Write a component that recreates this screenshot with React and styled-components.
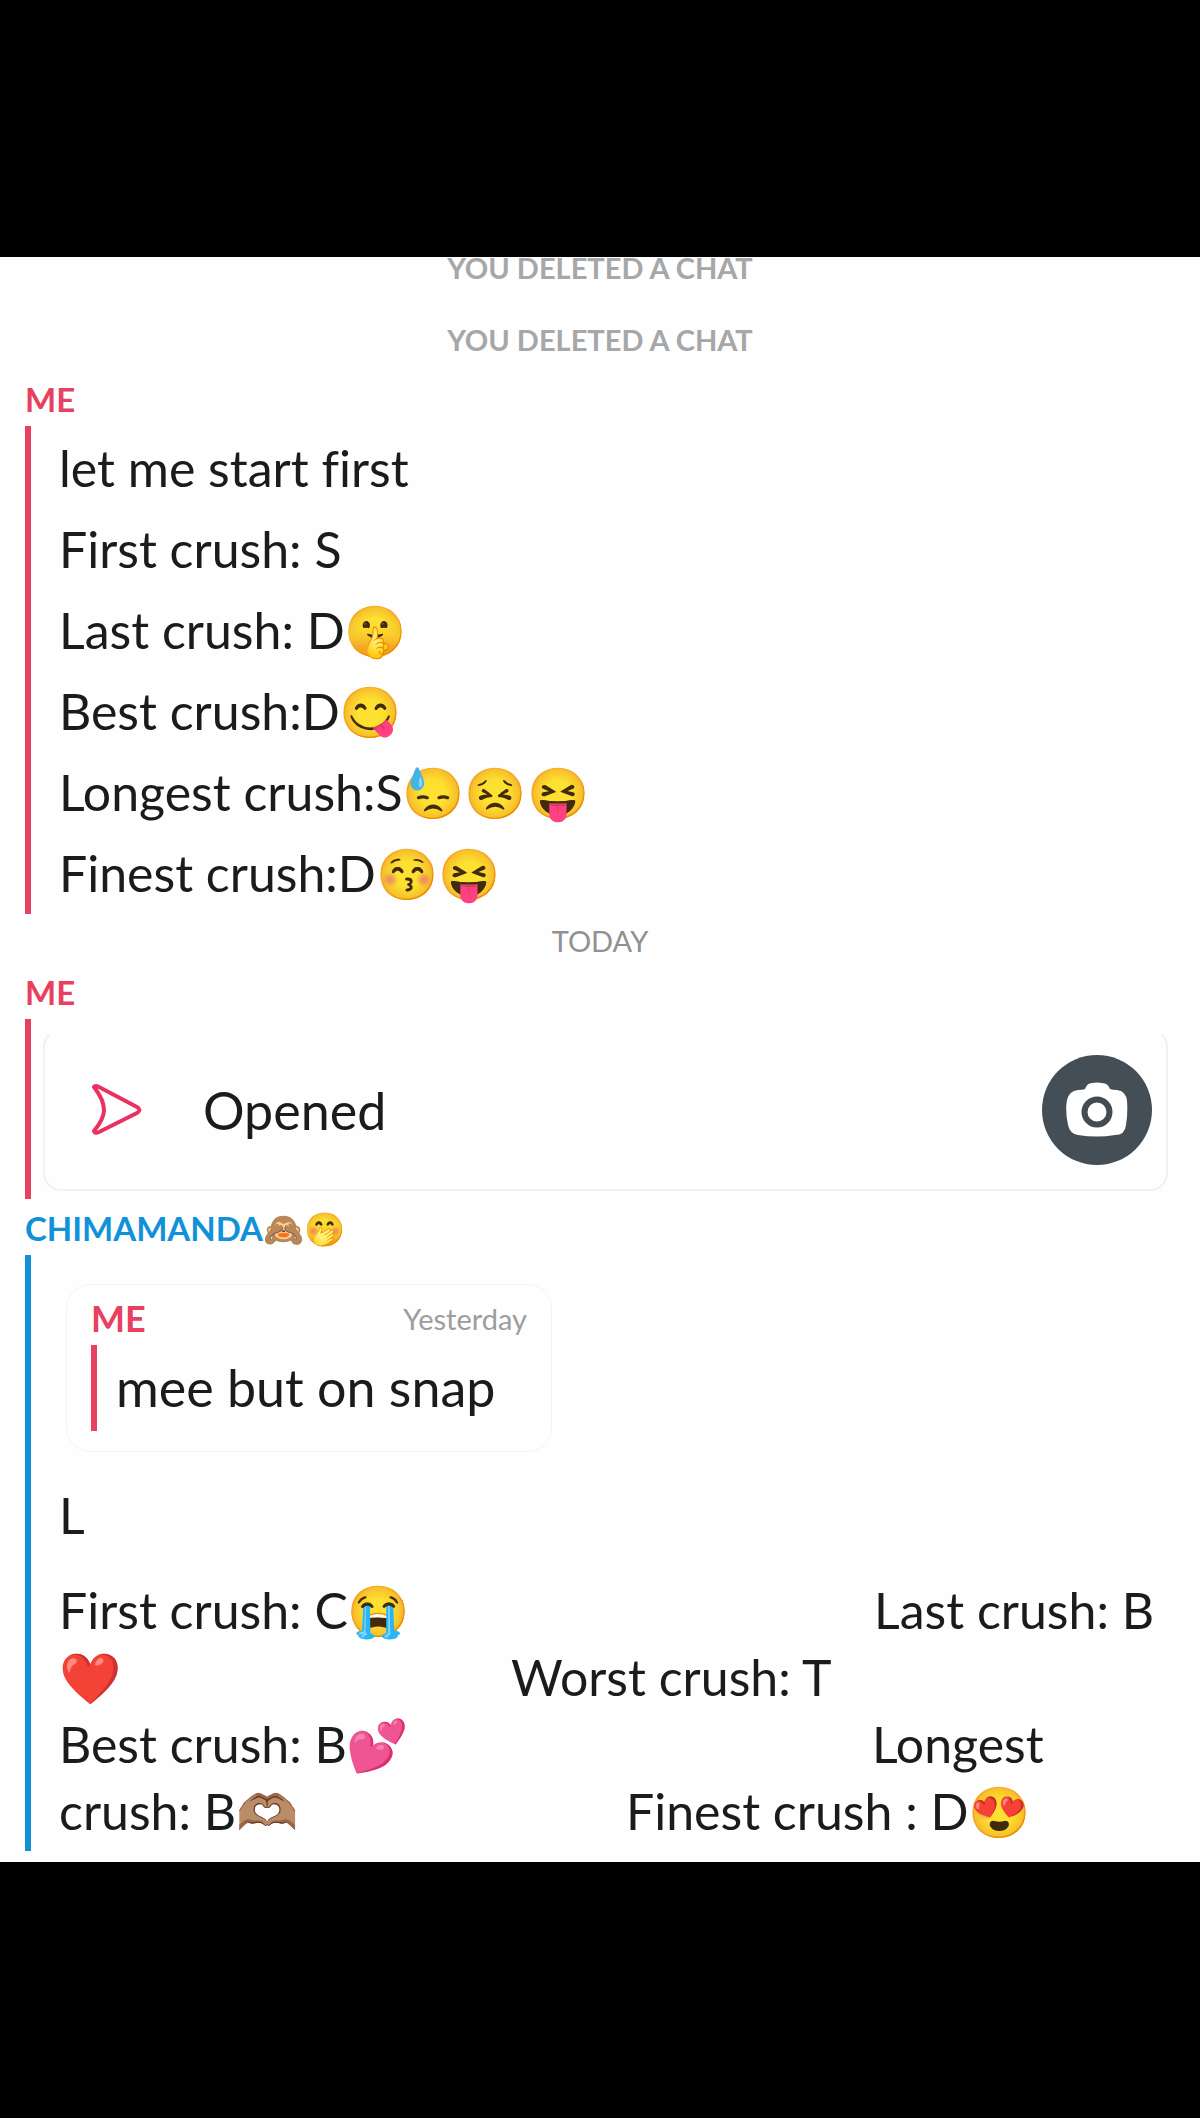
import styled, { createGlobalStyle } from 'styled-components';

const RED = '#e8415f';
const BLUE = '#1191d8';

const GlobalStyle = createGlobalStyle`
  body {
    margin: 0;
    background: #000;
    font-family: Lato, 'Noto Color Emoji', sans-serif;
    font-variant-ligatures: none;
  }
`;

const Page = styled.div`
  display: flex;
  flex-direction: column;
  justify-content: center;
  min-height: 100vh;
`;

const Screen = styled.main`
  background: #fefefe;
  color: #191b1c;
  padding-bottom: 11px;
`;

const Notices = styled.div`
  display: flex;
  flex-direction: column;
  align-items: center;
  gap: 50px;
  padding-bottom: 23px;
`;

const Notice = styled.div`
  font-size: 29px;
  font-weight: 700;
  line-height: 22px;
  color: #a5a7a9;
`;

const DateLabel = styled.div`
  text-align: center;
  font-size: 29px;
  line-height: 53px;
  color: #8f9193;
`;

const Sender = styled.div`
  font-size: ${(props) => props.$size || 33}px;
  font-weight: 700;
  line-height: 50px;
  padding-bottom: 2px;
  color: ${(props) => props.$color};
`;

const Group = styled.section`
  padding: 0 32px 0 25px;
  margin-bottom: ${(props) => props.$after || 0}px;
`;

const Thread = styled.div`
  border-left: 6px solid ${(props) => props.$color};
  padding: ${(props) => props.$padding};
`;

const Line = styled.div`
  display: flex;
  font-size: 50px;
  line-height: ${(props) => (props.$tall ? 81 : 67)}px;
  white-space: nowrap;
`;

// first half of a line, the second half starts after it
const Lead = styled.span`
  flex: 0 0 ${(props) => props.$width}px;
`;

const SnapCard = styled.div`
  display: flex;
  align-items: center;
  height: 158px;
  padding: 0 14px 0 46px;
  border: 2px solid #f0f1f1;
  border-top-color: transparent;
  border-radius: 18px;
`;

const SnapStatus = styled.span`
  flex: 1;
  margin-left: 60px;
  font-size: 52px;
`;

const CameraButton = styled.button`
  display: flex;
  align-items: center;
  justify-content: center;
  width: 110px;
  height: 110px;
  padding: 0;
  border: none;
  border-radius: 50%;
  background: #444e57;
`;

const Quote = styled.blockquote`
  width: 436px;
  margin: 28px 0 30px 7px;
  padding: 8px 24px 20px 24px;
  border: 1px solid #f3f4f4;
  border-radius: 24px;
`;

const QuoteHeader = styled.div`
  display: flex;
  justify-content: space-between;
  align-items: center;
`;

const QuoteTime = styled.time`
  font-size: 29px;
  color: #9b9d9f;
`;

const QuoteText = styled.div`
  border-left: 6px solid ${RED};
  padding-left: 19px;
  font-size: 52px;
  line-height: 84px;
  padding-bottom: 2px;
  white-space: nowrap;
`;

const Gap = styled.div`
  height: 28px;
`;

const SentIcon = () => (
  <svg width="52" height="52" viewBox="0 0 52 52" fill="none" stroke="#ea3160" strokeWidth="4" strokeLinejoin="round" aria-hidden="true">
    <path d="M3 3 Q4 1 8 3 L46 23 Q51 26 46 29 L8 48 Q4 50 3 47 Q13 35 13 26 Q13 16 3 3 Z" />
  </svg>
);

const CameraIcon = () => (
  <svg width="62" height="56" viewBox="0 0 62 56" aria-hidden="true">
    <path
      d="M19 7 Q21 1 26 1 Q31 0 36 1 Q42 1 44 7 Q46 8 51 8 Q60 9 61 19 Q62 31 60 43 Q59 53 49 53 Q31 56 12 53 Q4 52 2 43 Q-1 29 1 18 Q3 9 12 8 Q17 8 19 7 Z"
      fill="#fff"
    />
    <circle cx="31" cy="30" r="12.500" fill="#fff" stroke="#434b53" strokeWidth="6" />
  </svg>
);

const App = () => (
  <Page>
    <GlobalStyle />
    <Screen>
      <Notices>
        <Notice>YOU DELETED A CHAT</Notice>
        <Notice>YOU DELETED A CHAT</Notice>
      </Notices>

      <Group>
        <Sender $color={RED}>ME</Sender>
        <Thread $color={RED} $padding="2px 0 0 28px">
          <Line $tall>let me start first</Line>
          <Line $tall>First crush: S</Line>
          <Line $tall>Last crush: D🤫</Line>
          <Line $tall>Best crush:D😋</Line>
          <Line $tall>Longest crush:S😓😣😝</Line>
          <Line $tall>Finest crush:D😚😝</Line>
        </Thread>
      </Group>

      <DateLabel>TODAY</DateLabel>

      <Group $after={4}>
        <Sender $color={RED}>ME</Sender>
        <Thread $color={RED} $padding="10px 0 8px 12px">
          <SnapCard>
            <SentIcon />
            <SnapStatus>Opened</SnapStatus>
            <CameraButton aria-label="Camera">
              <CameraIcon />
            </CameraButton>
          </SnapCard>
        </Thread>
      </Group>

      <Group>
        <Sender $color={BLUE}>CHIMAMANDA🙈🤭</Sender>
        <Thread $color={BLUE} $padding="1px 0 6px 28px">
          <Quote>
            <QuoteHeader>
              <Sender $size={36} $color={RED}>ME</Sender>
              <QuoteTime>Yesterday</QuoteTime>
            </QuoteHeader>
            <QuoteText>mee but on snap</QuoteText>
          </Quote>
          <Line>L</Line>
          <Gap />
          <Line><Lead $width={815}>First crush: C😭</Lead>Last crush: B</Line>
          <Line><Lead $width={452}>❤️</Lead>Worst crush: T</Line>
          <Line><Lead $width={813}>Best crush: B💕</Lead>Longest</Line>
          <Line><Lead $width={567}>crush: B🫶🏽</Lead>Finest crush : D😍</Line>
        </Thread>
      </Group>
    </Screen>
  </Page>
);

export default App;
